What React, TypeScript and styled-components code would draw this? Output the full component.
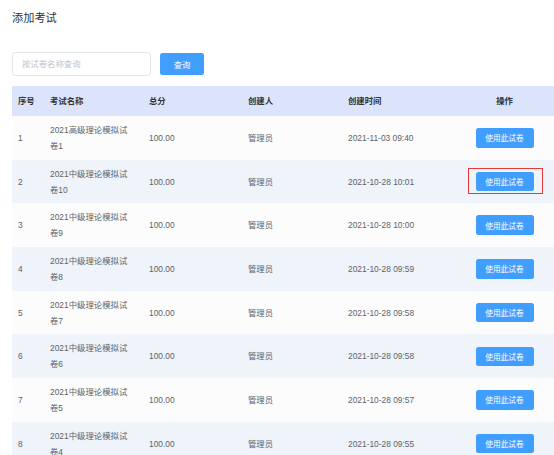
import React from "react";
import styled, { createGlobalStyle } from "styled-components";

const GlobalStyle = createGlobalStyle`
  html, body { margin: 0; padding: 0; background: #ffffff; }
  body {
    font-family: "Liberation Sans", "Noto Sans CJK SC", Arial, sans-serif;
    color: #606266;
    overflow: hidden;
  }
  * { box-sizing: border-box; }
`;

const Page = styled.div`
  padding: 12px 0 0 12px;
  width: 554px;
`;

const Title = styled.h1`
  margin: 0;
  font-size: 11.2px;
  line-height: 13px;
  font-weight: 400;
  color: #333333;
`;

const SearchBar = styled.div`
  display: flex;
  align-items: center;
  gap: 9px;
  margin-top: 27px;
  height: 24px;
`;

const SearchInput = styled.input`
  width: 139px;
  height: 24px;
  border: 1px solid #e2e5ec;
  border-radius: 3px;
  padding: 0 9px;
  font-family: inherit;
  font-size: 8.4px;
  color: #606266;
  outline: none;
  &::placeholder { color: #c0c4cc; }
`;

const PrimaryButton = styled.button<{ $w: number; $h: number; $fs: number }>`
  width: ${(p) => p.$w}px;
  height: ${(p) => p.$h}px;
  background: #409eff;
  border: none;
  border-radius: 2.5px;
  color: #ffffff;
  font-family: inherit;
  font-size: ${(p) => p.$fs}px;
  padding: 0;
  cursor: pointer;
  display: inline-flex;
  align-items: center;
  justify-content: center;
`;

const Table = styled.table`
  margin-top: 10px;
  width: 542px;
  border-collapse: collapse;
  table-layout: fixed;
  font-size: 8.4px;
`;

const HeadCell = styled.th<{ $w: number; $center?: boolean }>`
  width: ${(p) => p.$w}px;
  height: 30px;
  padding: 0 6px;
  background: #dce4fb;
  color: #333333;
  font-weight: 700;
  text-align: ${(p) => (p.$center ? "center" : "left")};
  line-height: 16px;
`;

const Row = styled.tr<{ $even: boolean }>`
  background: ${(p) => (p.$even ? "#eff3fa" : "#fcfcfd")};
`;

const Cell = styled.td<{ $center?: boolean; $padRight?: number }>`
  padding: 5.85px ${(p) => p.$padRight ?? 6}px 5.85px 6px;
  line-height: 16px;
  color: #606266;
  text-align: ${(p) => (p.$center ? "center" : "left")};
  vertical-align: middle;
  word-break: break-all;
`;

const ActionWrap = styled.span<{ $marked: boolean }>`
  position: relative;
  display: inline-block;
  vertical-align: middle;
  line-height: 0;
  &::after {
    content: "";
    display: ${(p) => (p.$marked ? "block" : "none")};
    position: absolute;
    left: -8px;
    right: -9px;
    top: -4px;
    bottom: -3px;
    border: 1.2px solid #e8383a;
    pointer-events: none;
  }
`;

type Exam = { id: number; name: string; time: string };

const exams: Exam[] = [
  { id: 1, name: "2021高级理论模拟试卷1", time: "2021-11-03 09:40" },
  { id: 2, name: "2021中级理论模拟试卷10", time: "2021-10-28 10:01" },
  { id: 3, name: "2021中级理论模拟试卷9", time: "2021-10-28 10:00" },
  { id: 4, name: "2021中级理论模拟试卷8", time: "2021-10-28 09:59" },
  { id: 5, name: "2021中级理论模拟试卷7", time: "2021-10-28 09:58" },
  { id: 6, name: "2021中级理论模拟试卷6", time: "2021-10-28 09:58" },
  { id: 7, name: "2021中级理论模拟试卷5", time: "2021-10-28 09:57" },
  { id: 8, name: "2021中级理论模拟试卷4", time: "2021-10-28 09:55" },
];

export default function App() {
  return (
    <>
      <GlobalStyle />
      <Page>
        <Title>添加考试</Title>
        <SearchBar>
          <SearchInput placeholder="按试卷名称查询" />
          <PrimaryButton $w={44} $h={22} $fs={8.4}>查询</PrimaryButton>
        </SearchBar>
        <Table>
          <thead>
            <tr>
              <HeadCell $w={32}>序号</HeadCell>
              <HeadCell $w={99}>考试名称</HeadCell>
              <HeadCell $w={99}>总分</HeadCell>
              <HeadCell $w={100}>创建人</HeadCell>
              <HeadCell $w={113}>创建时间</HeadCell>
              <HeadCell $w={99} $center>操作</HeadCell>
            </tr>
          </thead>
          <tbody>
            {exams.map((e, i) => (
              <Row key={e.id} $even={i % 2 === 1}>
                <Cell>{e.id}</Cell>
                <Cell $padRight={10}>{e.name}</Cell>
                <Cell>100.00</Cell>
                <Cell>管理员</Cell>
                <Cell>{e.time}</Cell>
                <Cell $center>
                  <ActionWrap $marked={e.id === 2}>
                    <PrimaryButton $w={58} $h={19.5} $fs={7.7}>使用此试卷</PrimaryButton>
                  </ActionWrap>
                </Cell>
              </Row>
            ))}
          </tbody>
        </Table>
      </Page>
    </>
  );
}
